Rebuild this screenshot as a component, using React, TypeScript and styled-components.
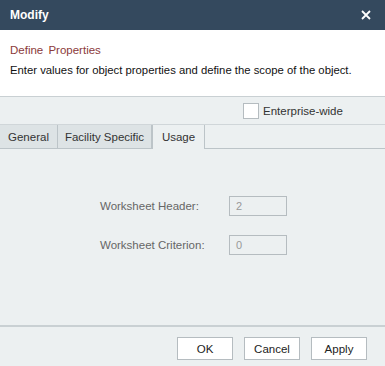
import React from "react";
import styled, { createGlobalStyle } from "styled-components";

const Global = createGlobalStyle`
  html, body { margin: 0; padding: 0; }
  *, *::before, *::after { box-sizing: border-box; }
  body { font-family: "Liberation Sans", Arial, sans-serif; font-size: 11px; background: #ecf0f1; }
`;

const Dialog = styled.div`
  width: 385px;
  height: 366px;
  display: flex;
  flex-direction: column;
  background: #ecf0f1;
  overflow: hidden;
`;

const TitleBar = styled.div`
  height: 30px;
  flex: none;
  background: #34495e;
  display: flex;
  align-items: center;
  justify-content: space-between;
  padding: 0 14px 0 10px;
  color: #fff;
`;

const Title = styled.span`
  font-weight: bold;
  font-size: 12px;
`;

const CloseIcon = () => (
  <svg width="10" height="10" viewBox="0 0 10 10">
    <path d="M1 1L9 9M9 1L1 9" stroke="#fff" strokeWidth="1.8" />
  </svg>
);

const Intro = styled.div`
  background: #fff;
  height: 67px;
  flex: none;
  padding: 14px 10px 0;
  border-bottom: 1px solid #c9d0d3;
`;

const Heading = styled.div`
  color: #8b3a3a;
  font-size: 11.5px;
  margin-bottom: 8px;
  word-spacing: 2px;
`;

const Desc = styled.div`
  color: #111;
  font-size: 11.3px;
`;

const ScopeRow = styled.div`
  height: 27px;
  flex: none;
  display: flex;
  justify-content: flex-end;
  align-items: center;
  padding-right: 20px;
`;

const Check = styled.span`
  width: 16px;
  height: 16px;
  background: #fff;
  border: 1px solid #b5bcc0;
  margin-right: 4px;
`;

const CheckLabel = styled.span`
  color: #333;
  width: 102px;
  font-size: 11.5px;
`;

const Tabs = styled.div`
  display: flex;
  height: 25px;
  flex: none;
  border-bottom: 1px solid #bcc4c8;
  border-top: 1px solid #d0d6d9;
`;

const Tab = styled.div<{ $active?: boolean; $w: number }>`
  display: flex;
  align-items: center;
  justify-content: center;
  width: ${(p) => p.$w}px;
  background: ${(p) => (p.$active ? "#ecf0f1" : "#dde3e5")};
  color: #333;
  font-size: 11.5px;
  border-right: 1px solid #bcc4c8;
  margin-bottom: ${(p) => (p.$active ? "-1px" : "0")};
  border-left: ${(p) => (p.$active ? "1px solid #bcc4c8" : "none")};
`;

const Body = styled.div`
  flex: 1;
  display: grid;
  grid-template-columns: 129px 58px;
  grid-auto-rows: 20px;
  row-gap: 19px;
  align-content: start;
  padding: 47px 0 0 100px;
`;

const Label = styled.span`
  color: #666;
  font-size: 11.5px;
  display: flex;
  align-items: center;
`;

const Field = styled.div`
  border: 1px solid #b5bcc0;
  background: #ecf0f1;
  color: #999;
  padding-left: 6px;
  display: flex;
  align-items: center;
`;

const Footer = styled.div`
  height: 41px;
  flex: none;
  border-top: 2px solid #c9d0d3;
  display: flex;
  justify-content: flex-end;
  align-items: flex-start;
  padding: 10px 18px 0 0;
  gap: 11px;
`;

const Button = styled.div`
  width: 56px;
  height: 23px;
  background: #fff;
  border: 1px solid #b5bcc0;
  display: flex;
  align-items: center;
  justify-content: center;
  color: #222;
  font-size: 11.5px;
`;

export default function App() {
  return (
    <>
      <Global />
      <Dialog>
        <TitleBar>
          <Title>Modify</Title>
          <CloseIcon />
        </TitleBar>
        <Intro>
          <Heading>Define Properties</Heading>
          <Desc>Enter values for object properties and define the scope of the object.</Desc>
        </Intro>
        <ScopeRow>
          <Check />
          <CheckLabel>Enterprise-wide</CheckLabel>
        </ScopeRow>
        <Tabs>
          <Tab $w={58}>General</Tab>
          <Tab $w={94}>Facility Specific</Tab>
          <Tab $w={53} $active>Usage</Tab>
        </Tabs>
        <Body>
          <Label>Worksheet Header:</Label>
          <Field>2</Field>
          <Label>Worksheet Criterion:</Label>
          <Field>0</Field>
        </Body>
        <Footer>
          <Button>OK</Button>
          <Button>Cancel</Button>
          <Button>Apply</Button>
        </Footer>
      </Dialog>
    </>
  );
}
